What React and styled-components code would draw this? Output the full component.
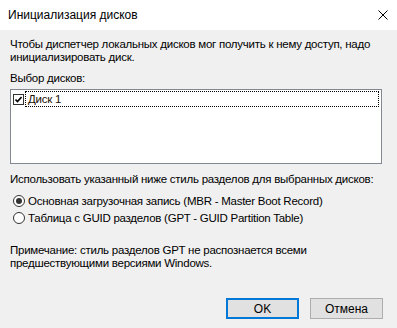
import React from 'react';
import styled, { createGlobalStyle } from 'styled-components';

const Global = createGlobalStyle`
  html, body {
    margin: 0;
    padding: 0;
    background: #f0f0f0;
  }
  body {
    font-family: "Liberation Sans", Arial, sans-serif;
    font-size: 11.5px;
    letter-spacing: -0.25px;
    color: #000;
  }
`;

const Dialog = styled.div`
  width: 397px;
  height: 328px;
  background: #f0f0f0;
  display: flex;
  flex-direction: column;
  overflow: hidden;
`;

const TitleBar = styled.div`
  height: 30px;
  background: #fff;
  display: flex;
  align-items: center;
  justify-content: space-between;
  padding: 0 8px 0 8px;
  box-sizing: border-box;
`;

const Title = styled.span`
  font-size: 12px;
  letter-spacing: 0;
  line-height: 13px;
  margin-top: 1px;
`;

const CloseBtn = styled.div`
  width: 10px;
  height: 10px;
  display: flex;
  margin-right: 1px;
`;

const Body = styled.div`
  flex: 1;
  display: flex;
  flex-direction: column;
  padding: 8px 15px 0 10px;
`;

const Text = styled.div`
  line-height: 13px;
  white-space: nowrap;
  margin-top: ${(p) => p.$mt || 0}px;
`;

const ListBox = styled.div`
  margin-top: 4px;
  height: 71px;
  background: #fff;
  border: 1px solid #828790;
  padding: 1px 2px;
`;

const ListItem = styled.div`
  height: 16px;
  display: flex;
  align-items: center;
`;

const CheckBox = styled.div`
  width: 9px;
  height: 9px;
  border: 1px solid #333;
  background: #fff;
  display: flex;
  align-items: center;
  justify-content: center;
  margin-top: 1px;
`;

const FocusLabel = styled.div`
  flex: 1;
  height: 14px;
  border: 1px dotted #000;
  margin-left: 1px;
  padding-left: 2px;
  line-height: 14px;
  color: #1a0f00;
`;

const RadioGroup = styled.div`
  margin-top: 6px;
  display: flex;
  flex-direction: column;
`;

const RadioRow = styled.div`
  height: 17px;
  display: flex;
  align-items: center;
  padding-left: 3px;
  white-space: nowrap;
`;

const Radio = styled.div`
  width: 10px;
  height: 10px;
  flex: none;
  border: 1px solid #333;
  border-radius: 50%;
  background: #fff;
  display: flex;
  align-items: center;
  justify-content: center;
  margin-right: 3px;

  &::after {
    content: '';
    display: ${(p) => (p.$checked ? 'block' : 'none')};
    width: 6px;
    height: 6px;
    border-radius: 50%;
    background: #333;
  }
`;

const Footer = styled.div`
  display: flex;
  justify-content: flex-end;
  gap: 11px;
  margin-top: auto;
  margin-right: -1px;
  margin-bottom: 9px;
`;

const Button = styled.div`
  width: 73px;
  height: 21px;
  box-sizing: border-box;
  background: #e1e1e1;
  border: ${(p) => (p.$primary ? '2px solid #0078d7' : '1px solid #adadad')};
  display: flex;
  align-items: center;
  justify-content: center;
  font-size: 12px;
  letter-spacing: 0;
`;

export default function App() {
  return (
    <Dialog>
      <Global />
      <TitleBar>
        <Title>Инициализация дисков</Title>
        <CloseBtn>
          <svg width="10" height="10" viewBox="0 0 10 10">
            <path d="M0.5 0.5 L9.5 9.5 M9.5 0.5 L0.5 9.5" stroke="#000" strokeWidth="1" />
          </svg>
        </CloseBtn>
      </TitleBar>
      <Body>
        <Text>
          Чтобы диспетчер локальных дисков мог получить к нему доступ, надо
          <br />
          инициализировать диск.
        </Text>
        <Text $mt={8}>Выбор дисков:</Text>
        <ListBox>
          <ListItem>
            <CheckBox>
              <svg width="7" height="7" viewBox="0 0 7 7">
                <path d="M0.5 3.5 L2.5 5.5 L6.5 1" stroke="#000" strokeWidth="1.6" fill="none" />
              </svg>
            </CheckBox>
            <FocusLabel>Диск 1</FocusLabel>
          </ListItem>
        </ListBox>
        <Text $mt={9}>Использовать указанный ниже стиль разделов для выбранных дисков:</Text>
        <RadioGroup>
          <RadioRow>
            <Radio $checked />
            Основная загрузочная запись (MBR - Master Boot Record)
          </RadioRow>
          <RadioRow>
            <Radio />
            Таблица с GUID разделов (GPT - GUID Partition Table)
          </RadioRow>
        </RadioGroup>
        <Text $mt={18}>
          Примечание: стиль разделов GPT не распознается всеми
          <br />
          предшествующими версиями Windows.
        </Text>
        <Footer>
          <Button $primary>OK</Button>
          <Button>Отмена</Button>
        </Footer>
      </Body>
    </Dialog>
  );
}
